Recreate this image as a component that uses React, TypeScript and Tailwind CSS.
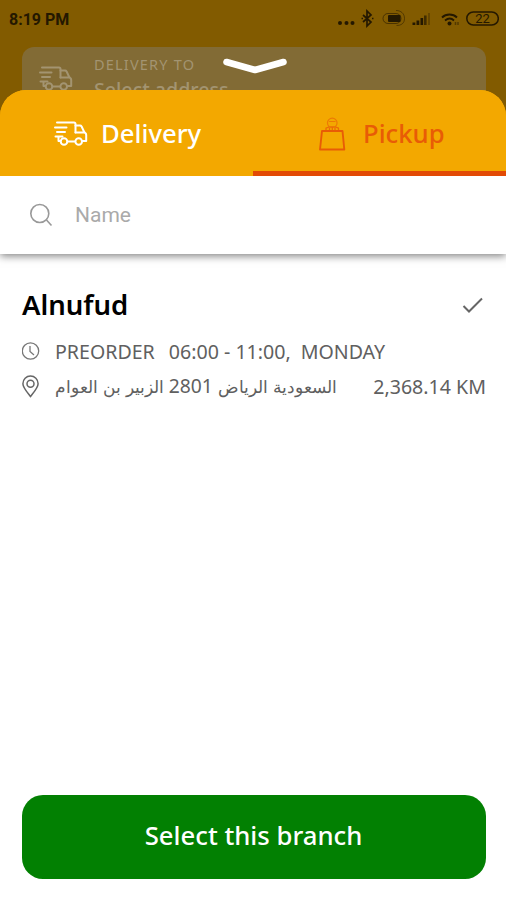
import { useState } from "react";

function TruckIcon({ className }: { className?: string }) {
  return (
    <svg
      viewBox="0 0 34 26"
      className={className}
      fill="none"
      stroke="currentColor"
      strokeWidth="2"
      strokeLinecap="round"
      strokeLinejoin="round"
    >
      <path d="M3 1.500h17q1.500 0 1.500 1.500v8.500M1 6.500h11.500M3 11h8M1.500 15.500h7M4.500 15.500v4.500h2" />
      <path d="M21.500 4.500h4.500q1 0 1.600 1l2.600 5.500 1.300 1.300q.7.700.7 1.700v6h-3.700M21.500 11.500h8.500M13.500 20.500h7.500" />
      <circle cx="10" cy="20.500" r="3.300" />
      <circle cx="24.700" cy="20.500" r="3.300" />
    </svg>
  );
}

function BagIcon({ className }: { className?: string }) {
  return (
    <svg
      viewBox="0 0 28 36"
      className={className}
      fill="none"
      stroke="currentColor"
      strokeLinejoin="round"
    >
      <path strokeWidth="1.900" d="M4 15h20.500l1.800 18.500H2L4 15z" />
      <path strokeWidth="1.300" opacity="0.800" d="M8 14.500v-2.300l3-1.200h6.500l3 1.200v2.300M11.500 14.500V12M14.300 14.500V11.500M17 14.500V12" />
      <path strokeWidth="1.200" opacity="0.600" d="M11 10.500a4.800 4.800 0 1 1 6.500 0M11 5.500h6.500" />
    </svg>
  );
}

function StatusBar() {
  return (
    <div className="flex h-9 items-center justify-between pl-[9px] pr-[7px] pt-[3px] text-[#241800]">
      <span className="font-[Roboto] text-[16px] font-bold">8:19 PM</span>
      <svg viewBox="0 0 162 24" className="h-6 w-[162px]" fill="none" stroke="currentColor">
        <g fill="currentColor" stroke="none">
          <circle cx="3" cy="15" r="2" />
          <circle cx="9.500" cy="15" r="2" />
          <circle cx="15.500" cy="15" r="2" />
        </g>
        <path strokeWidth="1.700" d="M26 7l8 7-4 4V3l4 4-8 7M24.500 10.500h1.500M35 10.500h1.500" />
        <rect x="46" y="5.500" width="18" height="10" rx="5" strokeWidth="1" opacity="0.600" />
        <path strokeWidth="1" opacity="0.500" d="M59 2.500c5 0 8.500 3 8.500 8s-3.500 7-8 7" />
        <rect x="51" y="7" width="12.500" height="7" rx="1" fill="currentColor" stroke="none" />
        <g fill="currentColor" stroke="none">
          <rect x="75.500" y="14.500" width="2.800" height="2.500" />
          <rect x="79.500" y="12.500" width="2.800" height="4.500" />
          <rect x="83.500" y="10" width="2.600" height="7" />
          <rect x="87" y="7.500" width="2.600" height="9.500" opacity="0.700" />
          <rect x="91" y="5" width="2" height="12" opacity="0.300" />
        </g>
        <path strokeWidth="1.800" d="M105 9.500c4-4 11-4 15 0M108 12.500c3-2.500 6.500-2.500 9 0" />
        <circle cx="112.500" cy="15.500" r="2" fill="currentColor" stroke="none" />
        <path strokeWidth="1.500" opacity="0.500" d="M118.500 17v-3M121 17v-3" />
        <rect x="129.800" y="4" width="31.500" height="13" rx="6.500" strokeWidth="1.500" />
        <text
          x="145.500"
          y="15.300"
          textAnchor="middle"
          fontFamily="Roboto, sans-serif"
          fontSize="13"
          fill="currentColor"
          stroke="none"
        >
          22
        </text>
      </svg>
    </div>
  );
}

export default function App() {
  const [name, setName] = useState("");

  return (
    <div className="flex h-[900px] w-[506px] flex-col overflow-hidden bg-white font-['Noto_Sans',sans-serif] whitespace-nowrap">
      {/* Dimmed home screen */}
      <div className="relative h-[130px] shrink-0 bg-[#825b00]">
        <StatusBar />
        <div className="ml-[22px] mr-5 mt-[11px] flex h-[83px] rounded-[12px] bg-[#826b35] text-[#a39471]">
          <TruckIcon className="ml-[17px] mt-[19px] h-[26px] w-[34px]" />
          <div className="ml-[21px] pt-[8px]">
            <p className="text-[14.5px] leading-[18px] tracking-[1.2px]">DELIVERY TO</p>
            <p className="mt-[4px] text-[19.6px] leading-[26px] font-medium">Select address</p>
          </div>
        </div>
        <svg viewBox="0 0 66 18" className="absolute left-[222px] top-[57px] h-[18px] w-[66px]" fill="none">
          <path
            d="M4.500 5L33 13 61.500 5"
            stroke="#fff"
            strokeWidth="6.500"
            strokeLinecap="round"
            strokeLinejoin="round"
          />
        </svg>
      </div>

      {/* Sheet */}
      <div className="relative -mt-10 flex grow flex-col overflow-hidden rounded-t-[26px] bg-[#f3a800]">
        <div className="relative z-10 grid h-[86px] shrink-0 grid-cols-2 bg-[#f3a800] text-[25.7px] font-medium">
          <button className="flex items-center pl-[54px] pt-[3px] text-white">
            <TruckIcon className="mb-px h-[26px] w-[34px]" />
            <span className="ml-[13px]">Delivery</span>
          </button>
          <button className="flex items-center border-b-[5px] border-[#e24a05] pl-[65px] pt-[7px] text-[#e85c06]">
            <BagIcon className="h-[36px] w-[28px]" />
            <span className="ml-[17px]">Pickup</span>
          </button>
        </div>

        <div className="relative flex h-[78px] shrink-0 items-center bg-white pl-[29px] shadow-[0_2px_8px_rgba(0,0,0,0.5)]">
          <svg viewBox="0 0 24 24" className="h-6 w-6" fill="none" stroke="#999" strokeWidth="1.600">
            <circle cx="10.800" cy="10.500" r="9" />
            <path d="M17.500 17l5 5.500" />
          </svg>
          <input
            value={name}
            onChange={(e) => setName(e.target.value)}
            placeholder="Name"
            className="ml-[22px] w-80 pt-0.5 font-[Roboto] text-[21px] outline-none placeholder:text-[#aaa]"
          />
        </div>

        <div className="flex grow flex-col bg-white">
          {/* Branch */}
          <div className="pl-[22px] pr-5 pt-[32px] text-[#606060]">
            <div className="flex h-[38px] items-center justify-between">
              <h2 className="text-[27.5px] font-semibold text-black">Alnufud</h2>
              <svg viewBox="0 0 24 20" className="mr-px h-5 w-6" fill="none" stroke="#666" strokeWidth="2">
                <path d="M2.500 11l5.500 5.500L21 3.500" />
              </svg>
            </div>
            <div className="mt-[10px] flex h-[35px] items-center text-[19.6px]">
              <svg viewBox="0 0 18 20" className="h-5 w-[18px]" fill="none" stroke="#777" strokeWidth="1.300">
                <circle cx="8.500" cy="9" r="8.200" />
                <path d="M8 4v5.500l4 3.500" />
              </svg>
              <span className="ml-[15px]">PREORDER</span>
              <span className="ml-[14px]">06:00 - 11:00,</span>
              <span className="ml-[10px]">MONDAY</span>
            </div>
            <div className="flex h-[35px] items-center text-[19.6px]">
              <svg viewBox="0 0 18 24" className="h-6 w-[18px]" fill="none" stroke="#666" strokeWidth="1.500">
                <path d="M8.500 21.500C5 17 .9 12.500.9 8.700a7.600 7.600 0 0 1 15.200 0c0 3.800-4.100 8.300-7.600 12.800z" />
                <circle cx="8.500" cy="8.700" r="3.500" />
              </svg>
              <span dir="rtl" className="ml-[15px] text-[17.4px] [word-spacing:0.4px]">
                السعودية الرياض <span className="text-[19.3px]">2801</span> الزبير بن العوام
              </span>
              <span className="ml-auto">2,368.14 KM</span>
            </div>
          </div>

          <button className="mb-[21px] ml-[22px] mr-5 mt-auto h-[84px] shrink-0 rounded-[21px] bg-[#028002] pr-px pb-[1px] text-[25.7px] font-medium text-white">
            Select this branch
          </button>
        </div>
      </div>
    </div>
  );
}
